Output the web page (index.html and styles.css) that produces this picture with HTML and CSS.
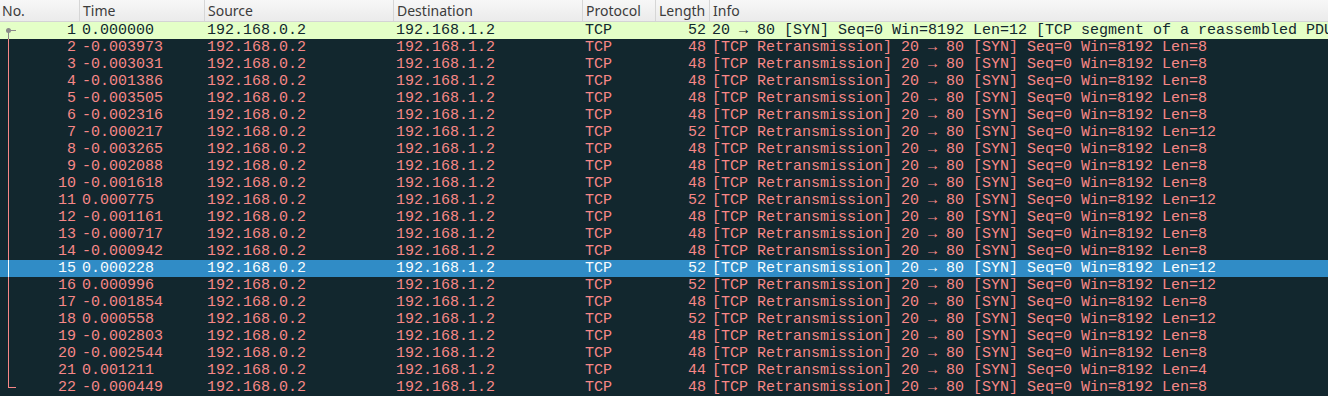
FILE: index.html
```html
<!DOCTYPE html>
<html>
<head>
<meta charset="utf-8">
<link rel="stylesheet" href="styles.css">
</head>
<body>
<div class="list">
  <div class="hdr">
    <div class="hc">No.</div>
    <div class="hc">Time</div>
    <div class="hc">Source</div>
    <div class="hc">Destination</div>
    <div class="hc">Protocol</div>
    <div class="hc">Length</div>
    <div class="hc">Info</div>
  </div>
  <div class="row ok first"><div class="c no"><span class="tree"></span>1</div><div class="c">0.000000</div><div class="c">192.168.0.2</div><div class="c">192.168.1.2</div><div class="c">TCP</div><div class="c len">52</div><div class="c">20 → 80 [SYN] Seq=0 Win=8192 Len=12 [TCP segment of a reassembled PDU]</div></div>
  <div class="row bad"><div class="c no"><span class="tree"></span>2</div><div class="c">-0.003973</div><div class="c">192.168.0.2</div><div class="c">192.168.1.2</div><div class="c">TCP</div><div class="c len">48</div><div class="c">[TCP Retransmission] 20 → 80 [SYN] Seq=0 Win=8192 Len=8</div></div>
  <div class="row bad"><div class="c no"><span class="tree"></span>3</div><div class="c">-0.003031</div><div class="c">192.168.0.2</div><div class="c">192.168.1.2</div><div class="c">TCP</div><div class="c len">48</div><div class="c">[TCP Retransmission] 20 → 80 [SYN] Seq=0 Win=8192 Len=8</div></div>
  <div class="row bad"><div class="c no"><span class="tree"></span>4</div><div class="c">-0.001386</div><div class="c">192.168.0.2</div><div class="c">192.168.1.2</div><div class="c">TCP</div><div class="c len">48</div><div class="c">[TCP Retransmission] 20 → 80 [SYN] Seq=0 Win=8192 Len=8</div></div>
  <div class="row bad"><div class="c no"><span class="tree"></span>5</div><div class="c">-0.003505</div><div class="c">192.168.0.2</div><div class="c">192.168.1.2</div><div class="c">TCP</div><div class="c len">48</div><div class="c">[TCP Retransmission] 20 → 80 [SYN] Seq=0 Win=8192 Len=8</div></div>
  <div class="row bad"><div class="c no"><span class="tree"></span>6</div><div class="c">-0.002316</div><div class="c">192.168.0.2</div><div class="c">192.168.1.2</div><div class="c">TCP</div><div class="c len">48</div><div class="c">[TCP Retransmission] 20 → 80 [SYN] Seq=0 Win=8192 Len=8</div></div>
  <div class="row bad"><div class="c no"><span class="tree"></span>7</div><div class="c">-0.000217</div><div class="c">192.168.0.2</div><div class="c">192.168.1.2</div><div class="c">TCP</div><div class="c len">52</div><div class="c">[TCP Retransmission] 20 → 80 [SYN] Seq=0 Win=8192 Len=12</div></div>
  <div class="row bad"><div class="c no"><span class="tree"></span>8</div><div class="c">-0.003265</div><div class="c">192.168.0.2</div><div class="c">192.168.1.2</div><div class="c">TCP</div><div class="c len">48</div><div class="c">[TCP Retransmission] 20 → 80 [SYN] Seq=0 Win=8192 Len=8</div></div>
  <div class="row bad"><div class="c no"><span class="tree"></span>9</div><div class="c">-0.002088</div><div class="c">192.168.0.2</div><div class="c">192.168.1.2</div><div class="c">TCP</div><div class="c len">48</div><div class="c">[TCP Retransmission] 20 → 80 [SYN] Seq=0 Win=8192 Len=8</div></div>
  <div class="row bad"><div class="c no"><span class="tree"></span>10</div><div class="c">-0.001618</div><div class="c">192.168.0.2</div><div class="c">192.168.1.2</div><div class="c">TCP</div><div class="c len">48</div><div class="c">[TCP Retransmission] 20 → 80 [SYN] Seq=0 Win=8192 Len=8</div></div>
  <div class="row bad"><div class="c no"><span class="tree"></span>11</div><div class="c">0.000775</div><div class="c">192.168.0.2</div><div class="c">192.168.1.2</div><div class="c">TCP</div><div class="c len">52</div><div class="c">[TCP Retransmission] 20 → 80 [SYN] Seq=0 Win=8192 Len=12</div></div>
  <div class="row bad"><div class="c no"><span class="tree"></span>12</div><div class="c">-0.001161</div><div class="c">192.168.0.2</div><div class="c">192.168.1.2</div><div class="c">TCP</div><div class="c len">48</div><div class="c">[TCP Retransmission] 20 → 80 [SYN] Seq=0 Win=8192 Len=8</div></div>
  <div class="row bad"><div class="c no"><span class="tree"></span>13</div><div class="c">-0.000717</div><div class="c">192.168.0.2</div><div class="c">192.168.1.2</div><div class="c">TCP</div><div class="c len">48</div><div class="c">[TCP Retransmission] 20 → 80 [SYN] Seq=0 Win=8192 Len=8</div></div>
  <div class="row bad"><div class="c no"><span class="tree"></span>14</div><div class="c">-0.000942</div><div class="c">192.168.0.2</div><div class="c">192.168.1.2</div><div class="c">TCP</div><div class="c len">48</div><div class="c">[TCP Retransmission] 20 → 80 [SYN] Seq=0 Win=8192 Len=8</div></div>
  <div class="row sel"><div class="c no"><span class="tree"></span>15</div><div class="c">0.000228</div><div class="c">192.168.0.2</div><div class="c">192.168.1.2</div><div class="c">TCP</div><div class="c len">52</div><div class="c">[TCP Retransmission] 20 → 80 [SYN] Seq=0 Win=8192 Len=12</div></div>
  <div class="row bad"><div class="c no"><span class="tree"></span>16</div><div class="c">0.000996</div><div class="c">192.168.0.2</div><div class="c">192.168.1.2</div><div class="c">TCP</div><div class="c len">52</div><div class="c">[TCP Retransmission] 20 → 80 [SYN] Seq=0 Win=8192 Len=12</div></div>
  <div class="row bad"><div class="c no"><span class="tree"></span>17</div><div class="c">-0.001854</div><div class="c">192.168.0.2</div><div class="c">192.168.1.2</div><div class="c">TCP</div><div class="c len">48</div><div class="c">[TCP Retransmission] 20 → 80 [SYN] Seq=0 Win=8192 Len=8</div></div>
  <div class="row bad"><div class="c no"><span class="tree"></span>18</div><div class="c">0.000558</div><div class="c">192.168.0.2</div><div class="c">192.168.1.2</div><div class="c">TCP</div><div class="c len">52</div><div class="c">[TCP Retransmission] 20 → 80 [SYN] Seq=0 Win=8192 Len=12</div></div>
  <div class="row bad"><div class="c no"><span class="tree"></span>19</div><div class="c">-0.002803</div><div class="c">192.168.0.2</div><div class="c">192.168.1.2</div><div class="c">TCP</div><div class="c len">48</div><div class="c">[TCP Retransmission] 20 → 80 [SYN] Seq=0 Win=8192 Len=8</div></div>
  <div class="row bad"><div class="c no"><span class="tree"></span>20</div><div class="c">-0.002544</div><div class="c">192.168.0.2</div><div class="c">192.168.1.2</div><div class="c">TCP</div><div class="c len">48</div><div class="c">[TCP Retransmission] 20 → 80 [SYN] Seq=0 Win=8192 Len=8</div></div>
  <div class="row bad"><div class="c no"><span class="tree"></span>21</div><div class="c">0.001211</div><div class="c">192.168.0.2</div><div class="c">192.168.1.2</div><div class="c">TCP</div><div class="c len">44</div><div class="c">[TCP Retransmission] 20 → 80 [SYN] Seq=0 Win=8192 Len=4</div></div>
  <div class="row bad last"><div class="c no"><span class="tree"></span>22</div><div class="c">-0.000449</div><div class="c">192.168.0.2</div><div class="c">192.168.1.2</div><div class="c">TCP</div><div class="c len">48</div><div class="c">[TCP Retransmission] 20 → 80 [SYN] Seq=0 Win=8192 Len=8</div></div>
</div>
</body>
</html>
```
FILE: styles.css
```css
html, body {
  margin: 0;
  padding: 0;
  background: #ffffff;
}
.list {
  width: 1328px;
  overflow: hidden;
}
.hdr, .row {
  display: grid;
  grid-template-columns: 79px 125px 189px 189px 73px 54px 1fr;
}
.hdr {
  height: 22px;
  box-sizing: border-box;
  background: linear-gradient(#f7f7f7, #ebebeb);
  border-bottom: 1px solid #d4d4d4;
}
.hc {
  font-family: "Noto Sans", "Open Sans", sans-serif;
  font-size: 14px;
  line-height: 21px;
  color: #3c3c3c;
  padding-left: 3px;
  box-sizing: border-box;
  border-left: 1px solid #d6d6d6;
  white-space: nowrap;
  overflow: hidden;
}
.hc:first-child {
  border-left: none;
  padding-left: 2px;
}
.row {
  height: 17px;
  font-family: "Liberation Mono", monospace;
  font-size: 15px;
  line-height: 17px;
  white-space: nowrap;
}
.c {
  padding-left: 3px;
  overflow: hidden;
  box-sizing: border-box;
}
.c.no, .c.len {
  text-align: right;
  padding-left: 0;
  padding-right: 3px;
}
.c.no {
  position: relative;
}
.ok {
  background: #e4ffc7;
  color: #12272e;
}
.bad {
  background: #12272e;
  color: #f78787;
}
.sel {
  background: #308cc6;
  color: #f8fbfd;
}
.tree {
  position: absolute;
  left: 8px;
  top: 0;
  bottom: 0;
  width: 1px;
  background: currentColor;
}
.first .tree {
  top: 8px;
  background: #8a8a8a;
}
.first .tree::before {
  content: "";
  position: absolute;
  left: -2px;
  top: 0;
  width: 10px;
  height: 1px;
  background: #8a8a8a;
}
.first .tree::after {
  content: "";
  position: absolute;
  left: -2px;
  top: -2px;
  width: 5px;
  height: 5px;
  border-radius: 50%;
  background: #8a8a8a;
}
.first + .row .tree {
  top: 0;
}
.last .tree {
  bottom: 8px;
}
.last .tree::after {
  content: "";
  position: absolute;
  left: 0;
  bottom: 0;
  width: 8px;
  height: 1px;
  background: currentColor;
}
```
